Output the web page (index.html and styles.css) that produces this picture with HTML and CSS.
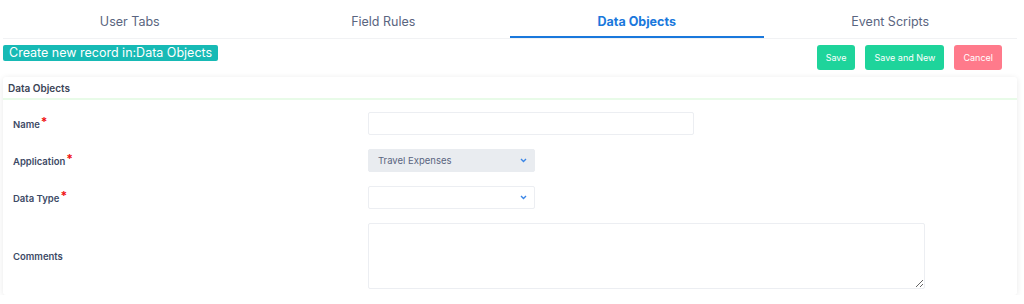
FILE: index.html
```html
<!DOCTYPE html>
<html lang="en">

<head>
    <meta name="viewport" content="width=device-width, initial-scale=1.0">
    <link rel="stylesheet" href="styles.css">
</head>

<body>

    <div class="page">
        <!-- Tabs -->
        <div class="tabs">
            <div class="tab">User Tabs</div>
            <div class="tab">Field Rules</div>
            <div class="tab active">Data Objects</div>
            <div class="tab">Event Scripts</div>
        </div>

        <!-- Title and actions -->
        <div class="toolbar">
            <span class="record-title">Create new record in:Data Objects</span>
            <div class="actions">
                <button class="btn btn-green">Save</button>
                <button class="btn btn-green">Save and New</button>
                <button class="btn btn-pink">Cancel</button>
            </div>
        </div>

        <!-- Form card -->
        <div class="card">
            <div class="card-header">Data Objects</div>
            <div class="card-body">
                <div class="form-row">
                    <label class="form-label">Name<span class="req">*</span></label>
                    <input class="field field-name" type="text">
                </div>
                <div class="form-row">
                    <label class="form-label">Application<span class="req">*</span></label>
                    <div class="select select-filled">
                        <span>Travel Expenses</span>
                        <svg width="7" height="5" viewBox="0 0 7 5"><path d="M1 1 L3.5 3.5 L6 1" fill="none" stroke="#3b86e6" stroke-width="1.4"/></svg>
                    </div>
                </div>
                <div class="form-row">
                    <label class="form-label">Data Type<span class="req">*</span></label>
                    <div class="select">
                        <span></span>
                        <svg width="7" height="5" viewBox="0 0 7 5"><path d="M1 1 L3.5 3.5 L6 1" fill="none" stroke="#3b86e6" stroke-width="1.4"/></svg>
                    </div>
                </div>
                <div class="form-row">
                    <label class="form-label">Comments</label>
                    <textarea class="field field-comments"></textarea>
                </div>
            </div>
        </div>
    </div>

</body>

</html>
```

FILE: styles.css
```css
* {
    box-sizing: border-box;
}

body {
    margin: 0;
    background: #fff;
    font-family: Inter, "Open Sans", sans-serif;
    color: #3d4a66;
}

.page {
    padding: 0 7px 0 3px;
}

/* Tabs */
.tabs {
    display: flex;
    height: 39px;
    border-bottom: 1px solid #f1f2f4;
}

.tab {
    flex: 1;
    display: flex;
    align-items: center;
    justify-content: center;
    padding-top: 6px;
    font-size: 12.5px;
    color: #5a6580;
    border-bottom: 2px solid transparent;
}

.tab.active {
    color: #1a78dc;
    font-weight: 700;
    border-bottom-color: #1a78dc;
}

/* Title row */
.toolbar {
    display: flex;
    justify-content: space-between;
    align-items: flex-start;
    padding: 6px 15px 0 0;
    height: 38px;
}

.record-title {
    background: #17bab5;
    color: #fff;
    font-size: 12.5px;
    line-height: 16px;
    padding: 0 6px;
    border-radius: 2px;
}

.actions {
    display: flex;
    gap: 10px;
}

.btn {
    border: none;
    border-radius: 3px;
    color: #fff;
    font-family: Inter, "Open Sans", sans-serif;
    font-size: 9px;
    height: 25px;
    padding: 0 9px;
}

.btn-green {
    background: #1ed49b;
}

.btn-pink {
    background: #ff7a8b;
}

/* Card */
.card {
    border-radius: 3px;
    box-shadow: 0 1px 6px rgba(0, 0, 0, 0.09);
    background: #fff;
}

.card-header {
    height: 23px;
    padding: 5px 0 0 5px;
    font-size: 10px;
    font-weight: 600;
    color: #3b4456;
    border-bottom: 2px solid #e8fbe8;
}

.card-body {
    padding: 12px 0 6px 10px;
    display: flex;
    flex-direction: column;
    gap: 14px;
}

.form-row {
    display: grid;
    grid-template-columns: 355px 1fr;
    align-items: center;
}

.form-label {
    font-size: 9.5px;
    font-weight: 600;
    color: #3d4a66;
}

.req {
    color: #f01010;
    font-size: 12px;
    font-weight: 700;
    position: relative;
    top: -2px;
    margin-left: 1px;
}

.field {
    border: 1px solid #eceef2;
    border-radius: 2px;
    background: #fff;
}

.field-name {
    width: 326px;
    height: 23px;
}

.field-comments {
    width: 557px;
    height: 66px;
    resize: vertical;
    font-family: Inter, "Open Sans", sans-serif;
}

.select {
    width: 167px;
    height: 23px;
    border: 1px solid #eceef2;
    border-radius: 2px;
    display: flex;
    align-items: center;
    justify-content: space-between;
    padding: 0 7px 0 9px;
    font-size: 9.5px;
    color: #5a6580;
}

.select-filled {
    background: #e9ecf0;
    border-color: #e9ecf0;
}
```
